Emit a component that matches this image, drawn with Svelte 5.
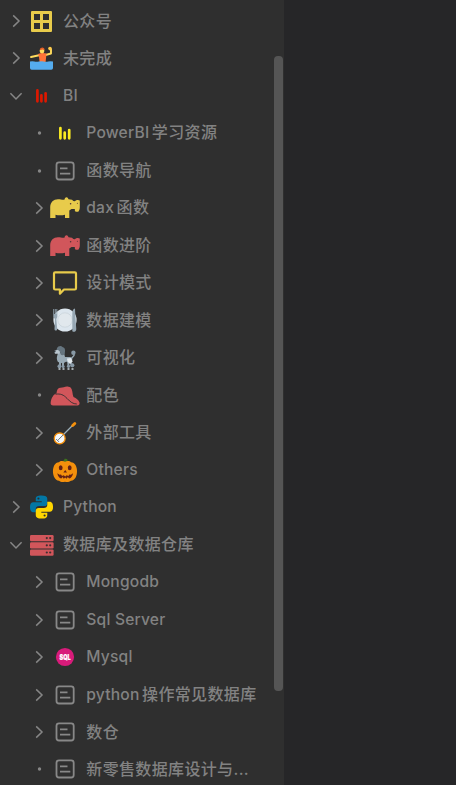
<script>
  const rows = [
    { label: ['公众号'], icon: 'grid', mark: 'right' },
    { label: ['未完成'], icon: 'polo', mark: 'right' },
    { label: ['BI'], icon: 'redbars', mark: 'down' },
    { label: ['PowerBI', '学习资源'], icon: 'bars', mark: 'dot', child: true },
    { label: ['函数导航'], icon: 'doc', mark: 'dot', child: true },
    { label: ['dax', '函数'], icon: 'hippo', mark: 'right', child: true },
    { label: ['函数进阶'], icon: 'redhippo', mark: 'right', child: true },
    { label: ['设计模式'], icon: 'speech', mark: 'right', child: true },
    { label: ['数据建模'], icon: 'plate', mark: 'right', child: true },
    { label: ['可视化'], icon: 'poodle', mark: 'right', child: true },
    { label: ['配色'], icon: 'hat', mark: 'dot', child: true },
    { label: ['外部工具'], icon: 'banjo', mark: 'right', child: true },
    { label: ['Others'], icon: 'pumpkin', mark: 'right', child: true },
    { label: ['Python'], icon: 'python', mark: 'right' },
    { label: ['数据库及数据仓库'], icon: 'server', mark: 'down' },
    { label: ['Mongodb'], icon: 'doc', mark: 'right', child: true },
    { label: ['Sql Server'], icon: 'doc', mark: 'right', child: true },
    { label: ['Mysql'], icon: 'sql', mark: 'right', child: true },
    { label: ['python', '操作常见数据库'], icon: 'doc', mark: 'right', child: true },
    { label: ['数仓'], icon: 'doc', mark: 'right', child: true },
    { label: ['新零售数据库设计与...'], icon: 'doc', mark: 'dot', child: true }
  ];
  const latin = (s) => /^[A-Za-z ]+$/.test(s);
</script>

<main>
  <aside>
    <ul>
      {#each rows as row}
        <li class:child={row.child}>
          <svg class="mark" viewBox="0 0 16 16">
            {#if row.mark === 'right'}<path d="M5.200 2.400 11 8l-5.800 5.600" />
            {:else if row.mark === 'down'}<path d="M2.400 5.200 8 11l5.600-5.800" />
            {:else}<circle cx="8.500" cy="8" r="1.700" />{/if}
          </svg>
          <svg class="icon" viewBox="0 0 30 30">
            {#if row.icon === 'grid'}
              <path fill="#e8cb4b" fill-rule="evenodd" d="M6 5h19q1 0 1 1v19q0 1-1 1H6q-1 0-1-1V6q0-1 1-1Zm2 3v6h6V8Zm9 0v6h6V8Zm-9 9v6h6v-6Zm9 0v6h6v-6Z" />
            {:else if row.icon === 'polo'}
              <path fill="none" stroke="#ffdc5d" stroke-width="1.900" stroke-linecap="round" stroke-linejoin="round" d="m5 14 8-1.800m6.500-.2 5.500-1.500V6.500" />
              <path fill="#ff7438" d="M12 11q4-1.500 8.500-.5L19.600 19h-6l-.6-5Z" />
              <circle cx="16" cy="8" r="2.400" fill="#ffdc5d" />
              <path fill="#e95f28" d="M13.600 7.200q.3-2.700 2.600-2.700 2.400 0 2.400 2.700l-2-.7Z" />
              <circle cx="24" cy="5.600" r="1.800" fill="#ffcc4d" />
              <path fill="#55acee" d="M4 18.500q2.200-.7 4.400 0t4.600 0 4.600 0 4.600 0 4.800 0V25q0 1.700-1.700 1.700H5.700Q4 26.700 4 25Z" />
            {:else if row.icon === 'redbars'}
              <path stroke="#dc1800" stroke-width="2.700" stroke-linecap="round" d="M11.400 9.400v10.900m4-6v6m4.200-8v8" />
            {:else if row.icon === 'bars'}
              <path stroke="#fbec21" stroke-width="2.700" stroke-linecap="round" d="M10.400 10v10.300m4.300-5.600v5.600m4.500-8.200v8.200" />
            {:else if row.icon === 'doc'}
              <rect x="6.500" y="6.300" width="17.200" height="17.200" rx="2.500" fill="none" stroke="#888" stroke-width="1.800" />
              <path stroke="#888" stroke-width="1.800" d="M10 12.300h7.500M10 17.600h10.300" />
            {:else if row.icon === 'hippo' || row.icon === 'redhippo'}
              <path fill={row.icon === 'hippo' ? '#e8cb4b' : '#d1565b'} d="M.2 25V14C.4 9 3.500 6.200 8 6.200c3 0 4.500.8 6.600.3.200-2.300 2.500-2.800 3.400-1.300l.5 1 3.500.6 1.300 1.200 1.400.3c1.600-1.400 3.600-1.900 5.100-.8v6.400c0 2.200-.5 2.800-1 4-.7 1.300-3.800 1-3.900-.1l-.1-1.800h-3.300l-2.200 1.500V25H15v-3.200c-3 .7-7 .7-9.500 0V25Z" />
              <circle cx="20.600" cy="10.700" r=".8" fill="#503336" />
              <circle cx="27.400" cy="10.200" r=".5" fill="#503336" />
            {:else if row.icon === 'speech'}
              <path fill="none" stroke="#e8cb4b" stroke-width="2.200" stroke-linejoin="round" d="M5.200 4.300h19.600q1.200 0 1.200 1.200v14.800q0 1.200-1.200 1.200H14L9.900 25.600v-4.100H5.200Q4 21.500 4 20.300V5.500q0-1.200 1.200-1.200Z" />
            {:else if row.icon === 'plate'}
              <circle cx="15" cy="15" r="11.600" fill="#dce6ee" />
              <circle cx="15" cy="15" r="7.200" fill="#e1e8ed" stroke="#c7d1d9" stroke-width=".7" />
              <path fill="#96a7b3" d="M3.300 4h.8v5h.7V4h.9v5h.7V4h.9v8l-1 2 .9 10c0 2-2.700 2-2.700 0L5 14l-1.700-2Z" />
              <path fill="#96a7b3" d="M22.300 26V8.500q0-4.500 2.700-5.100l.6 11.600.7 9c.2 3.200-4 3.300-4 2Z" />
            {:else if row.icon === 'poodle'}
              <path fill="none" stroke="#99aab5" stroke-width="1.900" d="M10 18v6m3-6v6m6-7 3 5m-4-5 .500 6" />
              <path fill="none" stroke="#99aab5" stroke-width="1.300" d="m21 16 3-3.500V9" />
              <path fill="#99aab5" d="M8 10h6l1 4h5c3 0 3 4 .5 5l-4.500-.3-3 1.800-5-1.500c-2-4-1-5 0-9Z" />
              <path fill="#e1e8ed" d="m17 15.500 4-.5 1.700 3.500L20 21l-2.500-2.500Z" />
              <path fill="#b8c5ce" d="m4 8 4-1.500 3 2-2 2.300H5Z" />
              <path fill="#66757f" d="M7 5.300C8 3 11 2.300 12.500 4c3.200.8 2.700 4 2.200 7-2.400 2.500-5 .8-4.500-2L8.200 7 6.500 7Z" />
              <g fill="#8899a6"><circle cx="23.400" cy="9.800" r="2.200" /><circle cx="22.300" cy="22.300" r="2.100" /><circle cx="18.500" cy="23.300" r="1.600" /><circle cx="9.500" cy="23.300" r="2" /><circle cx="13.200" cy="23.600" r="1.500" /></g>
              <path stroke="#ccd6dd" stroke-width="1.500" d="M8.500 26.100h2m2 0h2m3 0h2m2 0h2" />
              <circle cx="4.800" cy="8.600" r=".8" fill="#292f33" />
            {:else if row.icon === 'hat'}
              <path fill="#d1565b" d="M6.500 13.500C7 9.500 8 8 10 7.700c3 .300 5.500-2 8.500-1 3.500.3 3.800 4.300 4.300 8l.7 2.300c3 1.500 4.700 2.500 6 5.500.4 1.600-.6 3.100-2 3.100H3.300C1 25.500.2 24 .8 21.500 1.500 18 3.500 14 6.500 13.500Z" />
              <path fill="none" stroke="#2f2f2f" stroke-width=".9" d="M5.500 14.200c5-.7 8 .5 11.500 4.200 3.500 3.800 6 5.500 9.800 5.600" />
            {:else if row.icon === 'banjo'}
              <path stroke="#9cafb9" stroke-width="1.300" d="M9 21 22.500 7.500" />
              <path stroke="#f4900c" stroke-width="2.900" stroke-linecap="round" d="m22.700 7.500 2.100-2" />
              <circle cx="9.700" cy="20.400" r="5.400" fill="#f5f8fa" stroke="#f4900c" stroke-width="1.300" />
              <path stroke="#66757f" stroke-width="1" d="m13.300 16.800-5.100 5.100m-2-.8 2.700 2.700" />
            {:else if row.icon === 'pumpkin'}
              <path fill="#3e721d" d="M12.500 8V6q2 0 2-2.200 2.500-.5 3 1L18 8Z" />
              <path fill="#f4900c" d="M15 6.700c2-1.300 5-1 6 .5 8 0 8 18 0 18.500-2 1.500-4.500 1.300-6 1-2 .500-4.500.500-6-1C1 25 1 7 9 7.200c1-1.500 4-1.500 6-.5Z" />
              <g fill="#642116"><ellipse cx="10.700" cy="12.800" rx="1.900" ry="2.500" /><ellipse cx="19.700" cy="12.800" rx="1.900" ry="2.500" /><path d="m15.200 15 1.800 2.600h-3.600ZM7.300 18.200l2.200 1.500 1.500-.3 1 1.700 1.700-.8 1.500 1.300 1.500-1.300 1.700.8 1-1.700 1.500.3 2.200-1.500q-.8 4.400-4 5.300l-1.300-1.400-1.200 1.700-1.400-1.300-1.400 1.300-1.200-1.700-1.300 1.400q-3.200-.9-4-5.300Z" /></g>
            {:else if row.icon === 'python'}
              <g transform="translate(4 3.500) scale(.96)">
                <path fill="#0277a5" fill-rule="evenodd" d="M12 0C7.500 0 6 1.100 6 3.500V6h6.200v1H3.500C1 7 0 9 0 12s1 5.500 3.500 5.500H6V14c0-2 1.500-3 3.500-3H15c2 0 3-1.400 3-3V3.500C18 1 16 0 12 0ZM8.800 2a1.100 1.100 0 1 1 0 2.200 1.100 1.100 0 0 1 0-2.200Z" />
                <path fill="#ffd600" fill-rule="evenodd" d="M12 24c4.500 0 6-1.100 6-3.500V18h-6.200v-1h8.700C23 17 24 15 24 12s-1-5.500-3.500-5.500H18V10c0 2-1.500 3-3.500 3H9c-2 0-3 1.400-3 3v4.500C6 23 8 24 12 24Zm3.200-2a1.100 1.100 0 1 1 0-2.200 1.100 1.100 0 0 1 0 2.200Z" />
              </g>
            {:else if row.icon === 'server'}
              {#each [5, 12.200, 19.400] as y}
                <rect x="4" {y} width="23.600" height="6.300" rx="1.200" fill="#d1565b" />
                <circle cx="20.800" cy={y + 3.100} r="1.100" fill="#3c2f30" />
                <circle cx="24.200" cy={y + 3.100} r="1.100" fill="#3c2f30" />
              {/each}
            {:else if row.icon === 'sql'}
              <circle cx="15" cy="15" r="9.100" fill="#d81b7a" />
              <text x="15" y="17.500" textLength="11" lengthAdjust="spacingAndGlyphs">SQL</text>
            {/if}
          </svg>
          <span class="label">{#each row.label as part}<span class:latin={latin(part)}>{part}</span>{/each}</span>
        </li>
      {/each}
    </ul>
    <div class="scroll"><i></i></div>
  </aside>
</main>

<style>
  main { height: 785px; background: #262628; overflow: hidden; }
  aside { display: flex; width: 284px; height: 785px; background: #2f2f2f; overflow: hidden; }
  ul { flex: 1; min-width: 0; margin: 0; padding: 2.300px 0 0 8px; list-style: none; }
  li { display: flex; align-items: center; height: 37.430px; box-sizing: border-box; }
  li.child { padding-left: 23.300px; }
  .mark { flex: none; width: 16px; height: 16px; fill: none; stroke: #868686; stroke-width: 1.500; }
  .mark circle { fill: #868686; stroke: none; }
  .icon { flex: none; width: 30px; height: 30px; margin-left: 2px; }
  .child .icon { margin-left: 2.700px; }
  .icon text { font: 900 7px Inter, sans-serif; fill: #fff; stroke: #fff; stroke-width: .2; text-anchor: middle; }
  .label { display: flex; align-items: baseline; gap: 2.500px; margin: 0 0 1px 7px; font: 500 16px/24px Inter, "Noto Sans CJK SC", sans-serif; color: #828282; letter-spacing: .35px; white-space: nowrap; }
  .child .label { margin-left: 6.300px; }
  .latin { font-size: 15.600px; letter-spacing: .2px; }
  .latin:only-child { padding-top: 1px; }
  .scroll { flex: none; width: 10px; padding-top: 56px; }
  .scroll i { display: block; width: 9px; height: 635px; border-radius: 4px; background: #555; }
</style>
